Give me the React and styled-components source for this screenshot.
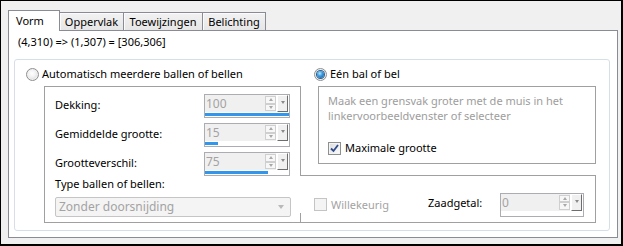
import React from 'react';
import styled, { createGlobalStyle } from 'styled-components';

const Global = createGlobalStyle`
  html, body { margin: 0; padding: 0; background: #f0f0f0; }
  body { font-family: "Noto Sans", "Open Sans", sans-serif; font-size: 11px; color: #000; line-height: 16px; }
  * { box-sizing: border-box; }
`;

const Window = styled.div`
  width: 623px;
  height: 246px;
  border-style: solid;
  border-color: #000;
  border-width: 1px 2px 2px 1px;
  background: #f0f0f0;
  padding: 9px 0 0 7px;
`;

const TabStrip = styled.div`
  display: flex;
  align-items: flex-end;
  height: 20px;
  position: relative;
  z-index: 1;
`;

const Tab = styled.div`
  width: ${p => p.$w}px;
  height: ${p => (p.$active ? 21 : 18)}px;
  margin-bottom: ${p => (p.$active ? -1 : 0)}px;
  margin-left: ${p => (p.$first ? 0 : -1)}px;
  border: 1px solid #898c95;
  border-bottom: none;
  background: ${p => (p.$active ? '#fff' : 'linear-gradient(#f2f2f2, #e6e6e6)')};
  box-shadow: ${p => (p.$active ? 'none' : 'inset 1px 1px 0 #fbfbfb')};
  position: relative;
  z-index: ${p => (p.$active ? 2 : 1)};
  display: flex;
  align-items: ${p => (p.$active ? 'flex-start' : 'center')};
  justify-content: ${p => (p.$active ? 'flex-start' : 'center')};
  padding-top: ${p => (p.$active ? 2 : 0)}px;
  padding-left: ${p => (p.$active ? 7 : 0)}px;
  white-space: nowrap;
`;

const Panel = styled.div`
  width: 610px;
  height: 208px;
  background: #fff;
  border: 1px solid #898c95;
  padding: 3px 0 0 5px;
`;

const Coords = styled.div`
  height: 16px;
  padding-left: 4px;
`;

const Group = styled.div`
  margin-top: 9px;
  width: 596px;
  height: 172px;
  border: 1px solid #d5dfe5;
  border-radius: 3px;
  display: flex;
  padding-top: 6px;
`;

const LeftCol = styled.div`
  width: 286px;
  padding-left: 11px;
  display: flex;
  flex-direction: column;
`;

const RightCol = styled.div`
  width: 296px;
  margin-left: -1px;
  display: flex;
  flex-direction: column;
`;

const RadioRow = styled.label`
  display: flex;
  align-items: center;
  height: 16px;
  gap: 3px;
  padding-left: ${p => p.$indent || 0}px;
`;

const RadioDot = styled.span`
  width: 13px;
  height: 13px;
  border-radius: 50%;
  border: 1px solid #8e8f8f;
  background: radial-gradient(circle at 45% 40%, #ffffff 0%, #f4f4f4 35%, #cfcfcf 100%);
  box-shadow: inset 0 0 0 1px #f0f0f0;
  display: flex;
  align-items: center;
  justify-content: center;
  flex: none;
  &::after {
    content: '';
    display: ${p => (p.$on ? 'block' : 'none')};
    width: 7px;
    height: 7px;
    border-radius: 50%;
    background: radial-gradient(circle at 40% 35%, #b6ecff 0%, #3f9be3 40%, #12548f 100%);
    box-shadow: 0 0 0 1px #2c5d8c;
  }
`;

const Fieldset = styled.div`
  margin-top: 4px;
  margin-left: ${p => p.$ml}px;
  width: ${p => p.$w}px;
  height: ${p => p.$h}px;
  border: 1px solid #a0a0a0;
  background: #fff;
`;

const LeftBox = styled(Fieldset)`
  padding: 7px 10px 5px 10px;
  display: flex;
  flex-direction: column;
`;

const SpinGrid = styled.div`
  display: grid;
  grid-template-columns: 1fr 86px;
  grid-auto-rows: 24px;
  row-gap: 5px;
  align-items: center;
`;

const FieldLabel = styled.div`
  padding-bottom: 2px;
  white-space: nowrap;
`;

const SpinBox = styled.div`
  width: ${p => p.$w}px;
  height: 24px;
  border: 1px solid #abadb3;
  background: #fff;
  display: flex;
  flex-direction: column;
`;

const SpinTop = styled.div`
  height: 17px;
  display: flex;
`;

const SpinValue = styled.div`
  flex: 1;
  background: #f0f0f0;
  color: #a3a3a3;
  font-size: 12px;
  line-height: 17px;
  padding-left: 1px;
`;

const Arrows = styled.div`
  width: 11px;
  display: flex;
  flex-direction: column;
  padding: 1px 0;
  background: #f0f0f0;
`;

const ArrowBtn = styled.div`
  height: 8px;
  border: 1px solid #cfcfcf;
  background: #f7f7f7;
  display: flex;
  align-items: center;
  justify-content: center;
  &::after {
    content: '';
    border-left: 2.5px solid transparent;
    border-right: 2.5px solid transparent;
    ${p => (p.$up ? 'border-bottom: 3px solid #a8a8a8;' : 'border-top: 3px solid #a8a8a8;')}
  }
`;

const DropBtn = styled.div`
  width: 11px;
  margin-left: 1px;
  margin-right: 1px;
  background: #f0f0f0;
  border-top: 1px solid #fff;
  border-left: 1px solid #fff;
  border-right: 1px solid #6d6d6d;
  border-bottom: 1px solid #6d6d6d;
  display: flex;
  justify-content: center;
  padding-top: 5px;
  &::after {
    content: '';
    width: 0;
    height: 0;
    border-left: 2.5px solid transparent;
    border-right: 2.5px solid transparent;
    border-top: 3px solid #8a8a8a;
  }
`;

const BarTrack = styled.div`
  margin-top: 1px;
  height: 3px;
`;

const BarFill = styled.div`
  height: 100%;
  background: #3296ea;
`;

const TypeLabel = styled.div`
  height: 16px;
  white-space: nowrap;
`;

const Combo = styled.div`
  margin-top: 5px;
  height: 20px;
  width: 236px;
  border: 1px solid #c5c5c5;
  border-radius: 2px;
  background: #f4f4f4;
  color: #a3a3a3;
  font-size: 12px;
  line-height: 18px;
  padding-left: 3px;
  display: flex;
  align-items: center;
  justify-content: space-between;
  padding-right: 6px;
  &::after {
    content: '';
    border-left: 3.5px solid transparent;
    border-right: 3.5px solid transparent;
    border-top: 4px solid #b9b9b9;
  }
`;

const RightBox = styled(Fieldset)`
  padding: 5px 10px 0 9px;
  display: flex;
  flex-direction: column;
`;

const Hint = styled.div`
  color: #9d9d9d;
  line-height: 15px;
  height: 48px;
  padding-top: 1px;
`;

const CheckRow = styled.label`
  display: flex;
  align-items: center;
  gap: 4px;
  height: 16px;
  color: ${p => (p.$disabled ? '#a3a3a3' : '#000')};
`;

const CheckBox = styled.span`
  width: 13px;
  height: 13px;
  flex: none;
  border: 1px solid ${p => (p.$disabled ? '#c4c4c4' : '#8e8f8f')};
  background: ${p => (p.$disabled ? '#f4f4f4' : 'linear-gradient(135deg, #dcdcdc, #fdfdfd)')};
  box-shadow: ${p => (p.$disabled ? 'none' : 'inset 0 0 0 1px #f4f4f4')};
  display: flex;
  align-items: center;
  justify-content: center;
`;

const BottomBox = styled.div`
  margin-top: 11px;
  width: 296px;
  height: 48px;
  border: 1px solid #a0a0a0;
  border-left: none;
  background: #fff;
  position: relative;
  display: flex;
  align-items: center;
  padding: 16px 11px 5px 14px;
  &::before {
    content: '';
    position: absolute;
    left: 0;
    bottom: 0;
    width: 1px;
    height: 9px;
    background: #a0a0a0;
  }
`;

const SeedLabel = styled.div`
  margin-left: auto;
  width: 72px;
  padding-bottom: 3px;
`;

function Spinner({ value, pct, width = 86 }) {
  return (
    <SpinBox $w={width}>
      <SpinTop>
        <SpinValue>{value}</SpinValue>
        <Arrows>
          <ArrowBtn $up />
          <ArrowBtn />
        </Arrows>
        <DropBtn />
      </SpinTop>
      <BarTrack>
        <BarFill style={{ width: `${pct}%` }} />
      </BarTrack>
    </SpinBox>
  );
}

function Check() {
  return (
    <svg width="9" height="9" viewBox="0 0 9 9">
      <path d="M1 4.5 L3.5 7 L8 1" fill="none" stroke="#2d4a8a" strokeWidth="1.8" />
    </svg>
  );
}

const rows = [
  { label: 'Dekking:', value: '100', pct: 100 },
  { label: 'Gemiddelde grootte:', value: '15', pct: 15 },
  { label: 'Grootteverschil:', value: '75', pct: 75 },
];

export default function App() {
  return (
    <>
      <Global />
      <Window>
        <TabStrip>
          <Tab $w={52} $active $first>Vorm</Tab>
          <Tab $w={65}>Oppervlak</Tab>
          <Tab $w={80}>Toewijzingen</Tab>
          <Tab $w={64}>Belichting</Tab>
        </TabStrip>
        <Panel>
          <Coords>(4,310) =&gt; (1,307) = [306,306]</Coords>
          <Group>
            <LeftCol>
              <RadioRow>
                <RadioDot />
                Automatisch meerdere ballen of bellen
              </RadioRow>
              <LeftBox $ml={18} $w={257} $h={137}>
                <SpinGrid>
                  {rows.map(r => (
                    <React.Fragment key={r.label}>
                      <FieldLabel>{r.label}</FieldLabel>
                      <Spinner value={r.value} pct={r.pct} />
                    </React.Fragment>
                  ))}
                </SpinGrid>
                <TypeLabel>Type ballen of bellen:</TypeLabel>
                <Combo>Zonder doorsnijding</Combo>
              </LeftBox>
            </LeftCol>
            <RightCol>
              <RadioRow $indent={14}>
                <RadioDot $on />
                Eén bal of bel
              </RadioRow>
              <RightBox $ml={18} $w={278} $h={78}>
                <Hint>Maak een grensvak groter met de muis in het linkervoorbeeldvenster of selecteer</Hint>
                <CheckRow>
                  <CheckBox><Check /></CheckBox>
                  Maximale grootte
                </CheckRow>
              </RightBox>
              <BottomBox>
                <CheckRow $disabled>
                  <CheckBox $disabled />
                  Willekeurig
                </CheckRow>
                <SeedLabel>Zaadgetal:</SeedLabel>
                <Spinner value="0" pct={0} width={84} />
              </BottomBox>
            </RightCol>
          </Group>
        </Panel>
      </Window>
    </>
  );
}
